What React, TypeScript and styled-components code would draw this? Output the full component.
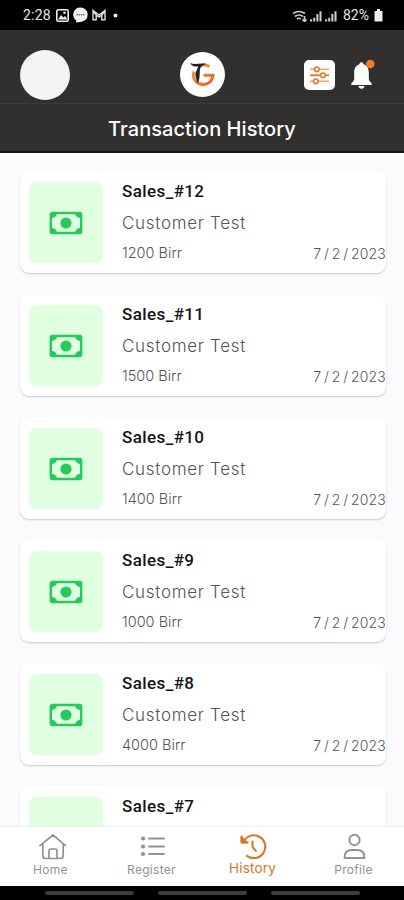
import React from "react";
import styled, { createGlobalStyle } from "styled-components";

const Global = createGlobalStyle`
  * { box-sizing: border-box; }
  body { margin: 0; background: #000; font-family: Inter, "Liberation Sans", sans-serif; }
`;

const Screen = styled.div`
  width: 404px;
  height: 900px;
  display: flex;
  flex-direction: column;
  background: #fbfbfd;
  overflow: hidden;
`;

const StatusBar = styled.div`
  height: 30px;
  flex: none;
  background: #000;
  color: #e4e4e4;
  display: flex;
  align-items: center;
  justify-content: space-between;
  padding: 0 21px 0 23px;
  font: 400 14px/30px Roboto, sans-serif;
`;

const StatusGroup = styled.div<{ $gap: number }>`
  display: flex;
  align-items: center;
  gap: ${(p) => p.$gap}px;
  svg { display: block; }
`;

const Clock = styled.span`
  letter-spacing: 0.2px;
  width: 29px;
`;

const Percent = styled.span`
  width: 28px;
  margin-left: 3px;
`;

const Header = styled.header`
  height: 123px;
  flex: none;
  background: #31302e;
  border-bottom: 2px solid #151413;
`;

const HeaderTop = styled.div`
  height: 74px;
  border-bottom: 1px solid #3d3b39;
  padding: 16px 28px 0 20px;
  display: grid;
  grid-template-columns: 50px 1fr 72px;
  align-items: start;
`;

const Avatar = styled.div`
  width: 50px;
  height: 50px;
  border-radius: 50%;
  background: #f4f3f4;
  margin-top: 4px;
`;

const Logo = styled.div`
  width: 45px;
  height: 45px;
  margin: 6px 0 0 110px;
  border-radius: 50%;
  background: #fff;
`;

const Actions = styled.div`
  display: flex;
  gap: 13px;
  padding-top: 13px;
  svg { display: block; flex: none; }
`;

const FilterButton = styled.button`
  width: 31px;
  height: 30px;
  padding: 0;
  border: 0;
  border-radius: 5px;
  background: #fff;
  flex: none;
  margin-top: 1px;
`;

const Title = styled.h1`
  margin: 0;
  color: #fff;
  text-align: center;
  font-size: 20px;
  font-weight: 500;
  line-height: 51px;
  letter-spacing: 0.05px;
`;

const List = styled.main`
  flex: 1;
  min-height: 0;
  overflow: hidden;
  padding: 18px 18px 0 20px;
  display: flex;
  flex-direction: column;
  gap: 21px;
`;

const Card = styled.article`
  flex: none;
  height: 102px;
  display: flex;
  background: #fff;
  border-radius: 9px;
  box-shadow: 0 1px 2px rgba(0, 0, 0, 0.2);
  padding: 11px 0 0 9px;
`;

const Tile = styled.div`
  width: 74px;
  height: 81px;
  border-radius: 8px;
  background: #e0ffe1;
  display: flex;
  align-items: center;
  justify-content: center;
  flex: none;
`;

const Details = styled.div`
  flex: 1;
  margin: -2px 0 0 19px;
`;

const SaleName = styled.div`
  font: 500 17px/22px Roboto, sans-serif;
  letter-spacing: 0.4px;
  color: #141414;
`;

const Customer = styled.div`
  margin-top: 10px;
  font-size: 17px;
  line-height: 22px;
  letter-spacing: 0.7px;
  font-weight: 300;
  color: #555;
`;

const Meta = styled.div`
  margin-top: 9px;
  display: flex;
  justify-content: space-between;
  font-size: 14.5px;
  font-weight: 300;
  line-height: 20px;
  color: #555;
`;

const Amount = styled.span`
  letter-spacing: 0;
`;

const SaleDate = styled.span`
  padding-top: 1px;
  font-size: 14px;
  letter-spacing: 0.15px;
  word-spacing: -1.3px;
`;

const Nav = styled.nav`
  height: 60px;
  flex: none;
  background: #fff;
  border-top: 1px solid #ededf0;
  display: grid;
  grid-template-columns: repeat(4, 101px);
`;

const NavItem = styled.a<{ $active?: boolean }>`
  display: flex;
  flex-direction: column;
  align-items: center;
  padding-top: 5px;
  color: ${(p) => (p.$active ? "#dc7422" : "#929292")};
  font-size: ${(p) => (p.$active ? 13.5 : 12)}px;
  font-weight: 400;
  letter-spacing: ${(p) => (p.$active ? 0.2 : 0.3)}px;
  line-height: 16px;
  svg { display: block; }
  span { margin-top: ${(p) => (p.$active ? -2 : 0)}px; }
`;

const SystemBar = styled.div`
  height: 14px;
  flex: none;
  background: #000;
  display: flex;
  gap: 24px;
  padding: 5px 0 0 45px;
`;

const Grip = styled.i`
  width: 89px;
  height: 4px;
  border-radius: 2px;
  background: #3d3d3d;
`;

const Money = () => (
  <svg width="34" height="24" viewBox="0 0 34 24">
    <rect x="1.8" y="2" width="30.4" height="20" rx="1.5" fill="none" stroke="#27c95a" strokeWidth="2.4" />
    <path d="M2 2h6a5 5 0 0 1-5 5ZM32 2h-6a5 5 0 0 0 5 5ZM2 22h6a5 5 0 0 0-5-5ZM32 22h-6a5 5 0 0 1 5-5Z" fill="#27c95a" />
    <circle cx="17" cy="12" r="5.6" fill="#27c95a" />
  </svg>
);

const Signal = () => (
  <svg width="12" height="13" viewBox="0 0 13 13" stroke="#ccc" strokeWidth="2.2">
    <path d="M1.200 13v-2.500M4.600 13V9M8 13V5M11.400 13V2" />
  </svg>
);

const BrandMark = () => (
  <svg width="45" height="45" viewBox="0 0 45 45" fill="none">
    <defs>
      <linearGradient id="brand" x1="13" y1="12" x2="32" y2="34" gradientUnits="userSpaceOnUse">
        <stop stopColor="#efa23c" />
        <stop offset="1" stopColor="#e65f27" />
      </linearGradient>
    </defs>
    <path d="M29.500 14.500c-3-1.800-7-2-10.500-.4M14 19.500c-2.500 7.500 3 13 9.500 12.900 5-.3 9-3.500 9.500-9.100h-9.500" stroke="url(#brand)" strokeWidth="3" />
    <path d="M10 11c5 2.500 10-.6 17 1-5 .8-7 3-7.200 7.500l-.3 5.500c-.2 3-1 5-2.500 6.500.5-4-3-7-.8-12.200l2-4.800c-3.600.4-6.200-.3-8.200-3.500Z" fill="#242424" />
  </svg>
);

const Sliders = () => (
  <svg width="31" height="30" viewBox="0 0 31 30" fill="#fff" stroke="#e37a28" strokeWidth="1.600">
    <path d="M6 9.300h19M6 21.300h19" stroke="#eda56f" />
    <path d="M6 15.300h19" strokeWidth="1.900" />
    <circle cx="12.800" cy="9.300" r="2.300" />
    <circle cx="19" cy="15.300" r="2.300" />
    <circle cx="11.800" cy="21.300" r="2.300" />
  </svg>
);

const Bell = () => (
  <svg width="28" height="32" viewBox="0 0 28 32">
    <path d="M13.500 3.200c-1.300 0-2 .9-2 2-3.700 1-5.300 4.200-5.300 8.300v6c0 2-1 3.100-2.800 4.400V26h20.200v-2.100c-1.800-1.300-2.800-2.400-2.800-4.400v-6c0-4.100-1.600-7.300-5.300-8.300 0-1.100-.7-2-2-2ZM10.500 27c.2 1.700 1.400 2.700 3 2.700s2.800-1 3-2.700Z" fill="#fff" />
    <circle cx="22.300" cy="5" r="4.300" fill="#f47b20" />
  </svg>
);

const NavIcon = ({ name }: { name: string }) => (
  <svg width="30" height="30" viewBox="0 0 30 30" fill="none" stroke="currentColor" strokeWidth="1.700" strokeLinejoin="round" strokeLinecap="round">
    {name === "Home" && (
      <path d="M4 13.700 17 3l12.500 10.700M6.800 12v11.500q0 3 3 3h14.400q3 0 3-3V12M13 26.200V19q0-2 2-2h4q2 0 2 2v7.200" />
    )}
    {name === "Register" && (
      <>
        <path d="M12 6.500h15M12 14.500h15M12 22h15" strokeWidth="1.900" />
        <path d="M6 6.500h.1M6 14.500h.1M6 22h.1" strokeWidth="4.200" />
      </>
    )}
    {name === "History" && (
      <>
        <path d="M6.300 8.500A11.400 11.400 0 1 1 9 23.800M3.600 4.500v6h6M14.500 9.500v5.300l3.300 4" strokeWidth="2.100" />
        <path d="M3.600 5v5.500h5.300Z" fill="currentColor" />
      </>
    )}
    {name === "Profile" && (
      <>
        <circle cx="15.500" cy="8" r="5.200" strokeWidth="1.900" />
        <path d="M5.500 26h20c0-5.500-2.800-8-7-8h-6c-4.200 0-7 2.500-7 8Z" strokeWidth="1.900" />
      </>
    )}
  </svg>
);

type Sale = { id: number; amount?: number };

const sales: Sale[] = [
  { id: 12, amount: 1200 },
  { id: 11, amount: 1500 },
  { id: 10, amount: 1400 },
  { id: 9, amount: 1000 },
  { id: 8, amount: 4000 },
  { id: 7 },
];

export default function App() {
  return (
    <Screen>
      <Global />
      <StatusBar>
        <StatusGroup $gap={4}>
          <Clock>2:28</Clock>
          <svg width="13" height="13" viewBox="0 0 13 13">
            <rect x=".8" y=".8" width="11.400" height="11.400" rx="1.500" fill="none" stroke="#eee" strokeWidth="1.600" />
            <path d="M2 10.500 5 6l2.400 2.500L9 7l2.500 3.500Z" fill="#eee" />
            <circle cx="8.500" cy="3.800" r="1.300" fill="#eee" />
          </svg>
          <svg width="15" height="16" viewBox="0 0 15 16">
            <path d="M7.500.5a7.200 7.200 0 0 1 0 14.400L3 15.500l.2-2A7.200 7.200 0 0 1 7.500.5Z" fill="#f2f2f2" />
            <path d="M3.500 7.800h8" stroke="#777" strokeWidth="1.400" strokeDasharray="1.500 .6" />
          </svg>
          <svg width="14" height="12" viewBox="0 0 14 12" fill="none" stroke="#ddd" strokeWidth="1.400">
            <path d="M1 10.800V1.500L7 6l6-4.500v9.300H9.800V6L7 8.200 4.200 6v4.800ZM1 2l3.200 4M13 2 9.800 6" />
          </svg>
          <svg width="12" height="5" viewBox="0 0 12 5"><circle cx="5.500" cy="2.500" r="2" fill="#eee" /></svg>
        </StatusGroup>
        <StatusGroup $gap={3}>
          <svg width="15" height="13" viewBox="0 0 15 13" fill="none" stroke="#ccc" strokeWidth="1.700">
            <path d="M1 4.500Q7 .5 13 4.500M3 7.500Q7 4.500 11 7.500M5 10q2-1.500 4 0M12.500 7v5.500M10.500 10.500l2 2 2-2" />
          </svg>
          <Signal />
          <Signal />
          <Percent>82%</Percent>
          <svg width="9" height="13" viewBox="0 0 9 13"><path d="M3 0h3v2h2.500v10.500h-8V2H3Z" fill="#eee" /></svg>
        </StatusGroup>
      </StatusBar>
      <Header>
        <HeaderTop>
          <Avatar />
          <Logo><BrandMark /></Logo>
          <Actions>
            <FilterButton aria-label="Filter"><Sliders /></FilterButton>
            <Bell />
          </Actions>
        </HeaderTop>
        <Title>Transaction History</Title>
      </Header>
      <List>
        {sales.map(({ id, amount }) => (
          <Card key={id}>
            <Tile><Money /></Tile>
            <Details>
              <SaleName>Sales_#{id}</SaleName>
              {amount !== undefined && (
                <>
                  <Customer>Customer Test</Customer>
                  <Meta>
                    <Amount>{amount} Birr</Amount>
                    <SaleDate>7 / 2 / 2023</SaleDate>
                  </Meta>
                </>
              )}
            </Details>
          </Card>
        ))}
      </List>
      <Nav>
        {["Home", "Register", "History", "Profile"].map((name) => (
          <NavItem key={name} $active={name === "History"}>
            <NavIcon name={name} />
            <span>{name}</span>
          </NavItem>
        ))}
      </Nav>
      <SystemBar><Grip /><Grip /><Grip /></SystemBar>
    </Screen>
  );
}
